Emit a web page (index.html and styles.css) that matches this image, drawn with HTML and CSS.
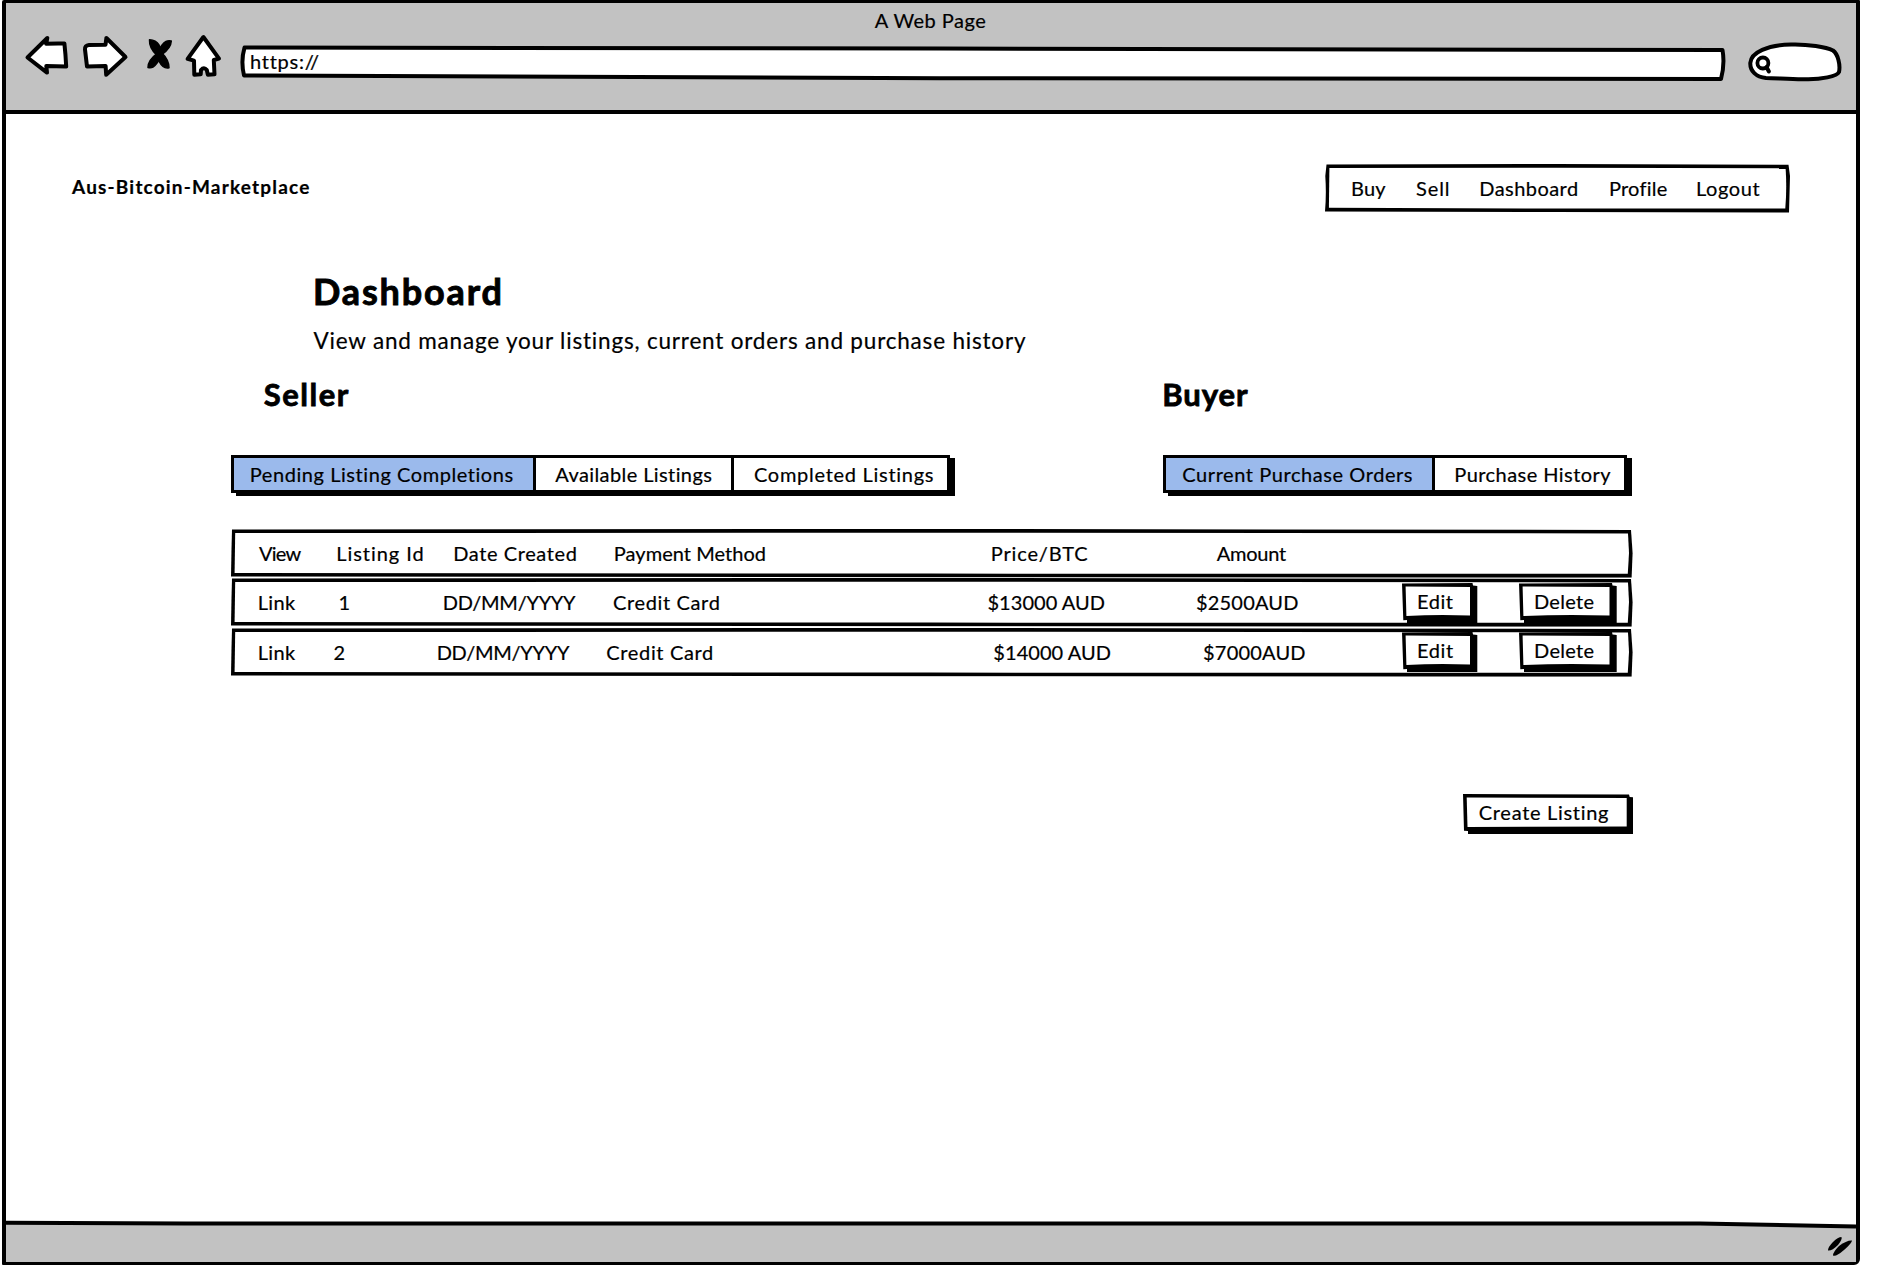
FILE: index.html
```html
<!DOCTYPE html>
<html lang="en">
<head>
<meta charset="utf-8">
<title>A Web Page</title>
<link rel="stylesheet" href="styles.css">
</head>
<body>
<svg class="defs" aria-hidden="true">
  <symbol id="row-outline" viewBox="0 0 1402 49" preserveAspectRatio="none">
    <path d="M1 .4L700 0 1400 1 1401.6 24 1400.6 49 700 48.4 0 47.8 .5 20Z"/>
    <path fill="#fff" d="M4.2 4.1L700 3.8 1397 4.4 1398 24 1396.8 45 700 44.8 3.6 44.2Z"/>
  </symbol>
  <symbol id="edit-outline" viewBox="0 0 76 40">
    <path d="M0 .5L70.5 0 71 2.6 75.3 3V40H5V37L1.3 37.2Z"/>
    <path fill="#fff" d="M3.6 3.6L68 4V32.6Q36 31.4 4.4 33Z"/>
  </symbol>
  <symbol id="delete-outline" viewBox="0 0 98 40">
    <path d="M0 .5L93 0 93.5 2.6 97.7 3V40H5V37L1.3 37.2Z"/>
    <path fill="#fff" d="M3.6 3.6L90.5 4V32.6Q46 31.4 4.4 33Z"/>
  </symbol>
</svg>

<div class="window">
  <header class="toolbar">
    <div class="title">A Web Page</div>
    <div class="controls">
      <svg class="icon back" width="46" height="44"><path d="M3.5 23.5L23.3 4 22.2 9.8Q31 9.2 40.4 9.5 41.6 20 42.2 32.6L22.3 32 23 38.6Z"/></svg>
      <svg class="icon forward" width="48" height="44"><path d="M24.4 4L23.5 10.8 7 11Q2.6 11.4 3 15.5L5 32.6 23.6 32 24.2 40.8 43.5 23Z"/></svg>
      <svg class="icon stop" width="30" height="44"><path d="M4.5 5.8Q11 6 14 11 16 15 17 19 24 26 24 33.8 18 35 14.5 28 13 24 12 21.500 4 14 4.500 5.800Z"/><path d="M26.300 7Q26 14 17 20.500 12 31 8 33 6 34 3 33.400 3 26 12 19.500 17 9.500 21 7.500 23 6.500 26.300 7Z"/></svg>
      <svg class="icon home" width="38" height="44"><path d="M19.4 3L3.6 24.8 10 26.6 10.3 40.7 16.7 40.3 17 36Q20 32.5 22.8 36L23.8 40.7 30.5 40.3 29.8 26 35 24.6Z"/></svg>
      <div class="address">
        <svg class="outline" viewBox="0 0 1488 38" preserveAspectRatio="none"><path d="M4.500 3.600L700 4.600 1482.500 6Q1485 20 1481 35L700 34.200 4 31.400Q.6 17 4.500 3.600Z"/></svg>
        <span>https://</span>
      </div>
      <svg class="icon search" width="100" height="44">
        <path d="M4.300 23C5 12 22 5 45 4.500 62 4 80 7 87 10.500 92 14 94.500 25 93 32 91 36.500 75 39.500 60 39.200 45 39.500 30 38 20 38 10 37 4 31 4.300 23Z"/>
        <circle cx="16.900" cy="23" r="5.500"/><path d="M20.500 27L22.900 31.500"/>
      </svg>
    </div>
  </header>

  <main class="page">
    <div class="masthead">
      <div class="brand">Aus-Bitcoin-Marketplace</div>
      <nav class="menu">
        <svg class="outline" viewBox="0 0 465 48.500"><path d="M1.500 .6L230 0 463.500 .8 465 12 464 48.500 230 48 0 47.500Q1.500 30 .3 12Z"/><path fill="#fff" d="M4.400 4.100L230 3.800 460.600 4.200Q462 24 460.300 44.600L230 44.600 3.900 43.800Z"/></svg>
        <a class="buy">Buy</a><a class="sell">Sell</a><a class="dash">Dashboard</a><a class="profile">Profile</a><a class="logout">Logout</a>
      </nav>
    </div>

    <h1>Dashboard</h1>
    <p class="lead">View and manage your listings, current orders and purchase history</p>

    <div class="content">
      <div class="groups">
        <section>
          <h2 class="seller">Seller</h2>
          <div class="tabs seller-tabs">
            <div class="tab active pending">Pending Listing Completions</div>
            <div class="tab available">Available Listings</div>
            <div class="tab completed">Completed Listings</div>
          </div>
        </section>
        <section>
          <h2 class="buyer">Buyer</h2>
          <div class="tabs buyer-tabs">
            <div class="tab active current">Current Purchase Orders</div>
            <div class="tab history">Purchase History</div>
          </div>
        </section>
      </div>

      <div class="table">
        <div class="row head">
          <svg class="outline"><use href="#row-outline"/></svg>
          <span class="view">View</span><span class="listing">Listing Id</span><span class="date">Date Created</span><span class="payment">Payment Method</span><span class="price">Price/BTC</span><span class="amount">Amount</span>
        </div>
        <div class="row first">
          <svg class="outline"><use href="#row-outline"/></svg>
          <span class="link">Link</span><span>1</span><span class="day">DD/MM/YYYY</span><span class="card">Credit Card</span><span class="aud">$13000 AUD</span><span class="sum">$2500AUD</span>
          <div class="button edit"><svg class="outline"><use href="#edit-outline"/></svg><span>Edit</span></div>
          <div class="button delete"><svg class="outline"><use href="#delete-outline"/></svg><span>Delete</span></div>
        </div>
        <div class="row second">
          <svg class="outline"><use href="#row-outline"/></svg>
          <span class="link">Link</span><span>2</span><span class="day">DD/MM/YYYY</span><span class="card">Credit Card</span><span class="aud">$14000 AUD</span><span class="sum">$7000AUD</span>
          <div class="button edit"><svg class="outline"><use href="#edit-outline"/></svg><span>Edit</span></div>
          <div class="button delete"><svg class="outline"><use href="#delete-outline"/></svg><span>Delete</span></div>
        </div>
      </div>

      <div class="button create">
        <svg class="outline" viewBox="0 0 170 40"><path d="M0 0L166 .5 166.700 3 170 3.200V40H5V37L1 36.700Z"/><path fill="#fff" d="M3.700 3.600L163.700 4V32.500L4.500 33Z"/></svg>
        <span>Create Listing</span>
      </div>
    </div>
  </main>

  <footer class="statusbar">
    <svg width="1850" height="42" viewBox="0 0 1850 42">
      <path fill="#c2c2c2" d="M0 3L1694 3.500 1850 7V42H0Z"/>
      <path class="rule" d="M0 2.800L180 3.600 1694 3.400Q1780 5 1850 6.600"/>
      <path d="M1822 30.500Q1822 27 1827 22 1832 17 1835.500 17 1836.500 19.500 1832 25 1826 31 1822 30.500Z"/>
      <path d="M1827 35.500Q1827 32 1833 26 1841 20 1846 20.500 1846 23 1838 30 1830 37 1827 35.500Z"/>
    </svg>
  </footer>
</div>
</body>
</html>
```
FILE: styles.css
```css
* { box-sizing: border-box; }

body {
  margin: 0;
  background: #fff;
  color: #000;
  font: 20px/36px Lato, "Liberation Sans", sans-serif;
  -webkit-text-stroke: .2px #000;
  white-space: nowrap;
}

.defs { position: absolute; width: 0; height: 0; }

.outline {
  position: absolute;
  inset: 0;
  width: 100%;
  height: 100%;
  z-index: -1;
  overflow: visible;
}

.window {
  display: flex;
  flex-direction: column;
  width: 1858px;
  height: 1265px;
  margin-left: 2px;
  border: 4px solid #000;
  border-top-width: 3px;
  border-radius: 2px 1px 6px 1px;
}

/* Browser toolbar */
.toolbar {
  height: 111px;
  padding-top: 1px;
  background: #c2c2c2;
  border-bottom: 4px solid #000;
}
.title {
  height: 30px;
  line-height: 32px;
  text-align: center;
  letter-spacing: .5px;
  margin-right: 1px;
}
.controls { display: flex; align-items: flex-start; padding-left: 18px; }
.icon {
  flex: none;
  fill: #fff;
  stroke: #000;
  stroke-width: 4px;
  stroke-linejoin: round;
  stroke-linecap: round;
}
.forward { margin-left: 12px; }
.stop { margin-left: 15px; fill: #000; stroke-width: 1.5px; }
.home { margin-left: 9px; }
.search { margin: 6px 0 0 18px; }
.search circle { stroke-width: 3.8px; }
.address {
  position: relative;
  z-index: 0;
  width: 1488px;
  height: 38px;
  margin: 10px 0 0 18px;
  padding-left: 10px;
  line-height: 35px;
  letter-spacing: .75px;
}
.address path { fill: #fff; stroke: #000; stroke-width: 4px; stroke-linejoin: round; }

/* Page */
.page { flex: 1; }
.masthead {
  display: flex;
  justify-content: space-between;
  align-items: center;
  margin: 50px 66.5px 0 66px;
}
.brand { font-size: 19px; font-weight: 700; letter-spacing: 1.18px; margin-bottom: 3px; }
.menu {
  position: relative;
  z-index: 0;
  display: grid;
  grid-template-columns: 65px 63.2px 129.6px 87px auto;
  width: 465px;
  height: 48.5px;
  padding-left: 26.6px;
  line-height: 48px;
}
.buy { letter-spacing: .1px; }
.sell { letter-spacing: .9px; }
.dash { letter-spacing: .45px; }
.profile { letter-spacing: .25px; }
.logout { letter-spacing: .6px; }

h1, h2, p { margin: 0; }
h1 {
  margin: 56px 0 0 307px;
  font-size: 36px;
  line-height: 44px;
  letter-spacing: 1.85px;
  -webkit-text-stroke-width: .9px;
}
.lead {
  margin: 13px 0 0 307.5px;
  font-size: 22.5px;
  line-height: 30px;
  letter-spacing: .81px;
}
.content {
  display: flex;
  flex-direction: column;
  width: 1402px;
  margin: 18px 0 0 224.8px;
}
.groups { display: grid; grid-template-columns: 932px 1fr; }
h2 {
  font-size: 31px;
  line-height: 40px;
  -webkit-text-stroke-width: .8px;
}
.seller { margin-left: 33px; letter-spacing: 1.5px; }
.buyer { margin-left: -.5px; letter-spacing: .9px; }

.tabs {
  display: flex;
  height: 38px;
  margin-top: 41.2px;
  border: 3px solid #000;
  box-shadow: 5px 3px 0 #000;
  line-height: 32px;
}
.seller-tabs { width: 719.7px; }
.buyer-tabs { width: 464px; }
.tab + .tab { border-left: 3px solid #000; }
.active { background: #9bbaec; }
.pending { width: 299.5px; padding-left: 16px; letter-spacing: .56px; }
.available { width: 197.7px; padding-left: 19px; letter-spacing: .4px; }
.completed { padding-left: 20px; letter-spacing: .72px; }
.current { width: 266.5px; padding-left: 16.5px; letter-spacing: .57px; }
.history { padding-left: 19px; letter-spacing: .45px; }

.table { display: flex; flex-direction: column; gap: 1px; margin-top: 36px; }
.row {
  position: relative;
  z-index: 0;
  display: grid;
  height: 48.8px;
  line-height: 48px;
}
.head { grid-template-columns: 77.3px 117px 160.5px 377px 226px auto; padding-left: 28.2px; }
.first { grid-template-columns: 80.9px 104.2px 170.2px 374.5px 208.5px 206.2px 117px auto; padding-left: 26.9px; }
.second { grid-template-columns: 75.8px 103.2px 169.7px 387px 209.7px 199.2px 117px auto; padding-left: 26.9px; }
.view { letter-spacing: -.8px; }
.listing { letter-spacing: .95px; }
.price { letter-spacing: .85px; }
.date { letter-spacing: .6px; }
.payment { letter-spacing: .05px; }
.amount { letter-spacing: -.25px; }
.link { letter-spacing: .4px; }
.day { letter-spacing: -.3px; }
.card { letter-spacing: .65px; }
.aud { letter-spacing: .05px; }
.sum { letter-spacing: .2px; }

.button {
  position: relative;
  z-index: 0;
  height: 40px;
  padding-left: 14.8px;
  line-height: 36px;
}
.row .button { margin-top: 4.2px; }
.edit { width: 76px; letter-spacing: .6px; }
.delete { width: 98px; letter-spacing: .3px; }
.create {
  align-self: flex-end;
  width: 170px;
  margin-top: 117px;
  padding-left: 16px;
  line-height: 37px;
  letter-spacing: .7px;
}

/* Status bar */
.statusbar { height: 41px; }
.statusbar svg { display: block; }
.rule { fill: none; stroke: #000; stroke-width: 4px; }
```
